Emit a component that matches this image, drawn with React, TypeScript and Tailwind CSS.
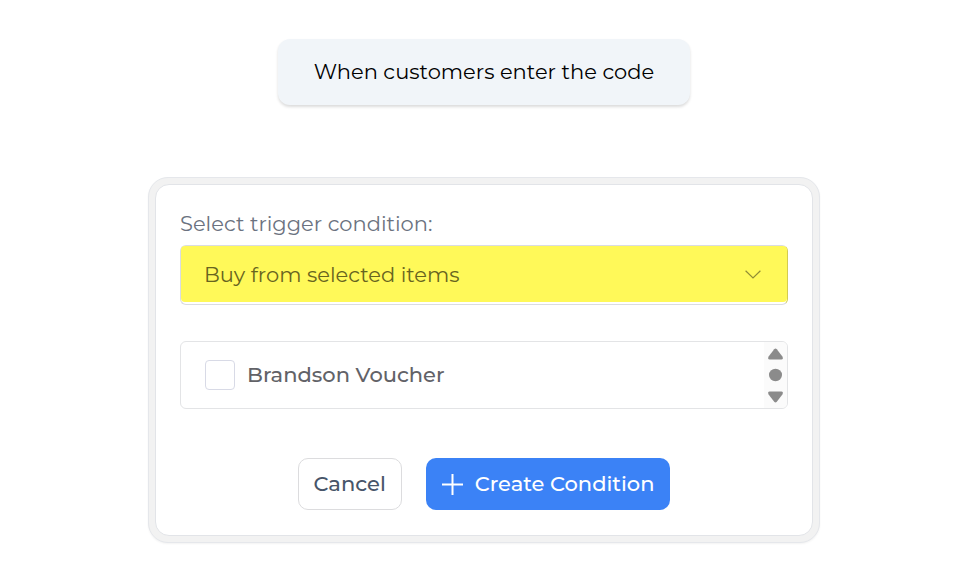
import { useState } from "react";
import type { ReactNode } from "react";

const conditions = ["Buy from selected items", "Buy from any category", "Spend a minimum amount"];

function StepCard({ children }: { children: ReactNode }) {
  return (
    <div className="rounded-xl bg-slate-100 px-9 py-[17px] text-[21px] leading-8 text-black shadow-[0_2px_3px_rgba(0,0,0,0.14)]">
      {children}
    </div>
  );
}

function ConditionSelect() {
  const [value, setValue] = useState(conditions[0]);

  return (
    <div>
      <label htmlFor="condition" className="block text-[21px] leading-8 text-[#6b7280]">
        Select trigger condition:
      </label>
      {/* Highlighted field */}
      <div className="relative mt-[5px] rounded-md border border-[#dadce2] border-r-[#d3cc4f] pb-0.5">
        <select
          id="condition"
          value={value}
          onChange={(e) => setValue(e.target.value)}
          className="block h-14 w-full appearance-none rounded-sm bg-[#fff959] pl-[23px] pr-16 pt-px text-[21px] text-[#67641f] outline-none"
        >
          {conditions.map((c) => (
            <option key={c}>{c}</option>
          ))}
        </select>
        <svg
          viewBox="0 0 16 9"
          className="pointer-events-none absolute right-[26px] top-6 h-[9px] w-4"
          fill="none"
          stroke="#918d35"
          strokeWidth="1.2"
          aria-hidden="true"
        >
          <path d="M.6.8 8 8 15.4.8" />
        </svg>
      </div>
    </div>
  );
}

function ItemList() {
  return (
    <div className="mt-9 flex h-[68px] overflow-hidden rounded-md border border-[#e3e4e6]">
      <label className="flex flex-1 items-center gap-3 pl-6 text-[21px] font-medium text-[#626267]">
        <input
          type="checkbox"
          className="size-[30px] appearance-none rounded-sm border border-[#d8dae6] bg-white checked:bg-blue-500"
        />
        Brandson Voucher
      </label>
      {/* Scroll bar */}
      <svg viewBox="0 0 23 66" className="h-full w-[23px] bg-[#fbfbfb]" fill="#8b8b8b" aria-hidden="true">
        <path d="M10.2 7.3q1.3-1.6 2.6 0l5.6 7.2q1.3 2.8-1 3H5.6q-2.3-.2-1-3z" />
        <ellipse cx="11.5" cy="33" rx="6.5" ry="6.2" />
        <path d="M10.2 59.7q1.3 1.6 2.6 0l5.6-7.2q1.3-2.8-1-3H5.6q-2.3.2-1 3z" />
      </svg>
    </div>
  );
}

export default function App() {
  return (
    <main className="flex min-h-screen flex-col items-center bg-white px-4 pb-9 pt-[39px] font-['Montserrat',Inter,sans-serif]">
      <StepCard>When customers enter the code</StepCard>

      {/* Condition form */}
      <section className="mt-[72px] w-full max-w-[672px] rounded-[20px] border border-[#e5e7eb] bg-[#f2f2f2] p-1.5 shadow-xs">
        <div className="rounded-[14px] border border-[#e2e4e8] bg-white px-6 pb-[25px] pt-[23px]">
          <ConditionSelect />
          <ItemList />

          <div className="mt-[49px] flex items-center justify-center gap-6 text-[21px] font-medium">
            <button type="button" className="h-[52px] rounded-[10px] border border-[#dcdcde] bg-white px-[15px] text-[#475569]">
              Cancel
            </button>
            <button type="button" className="flex h-[52px] items-center gap-3 rounded-[10px] bg-[#3b82f6] px-4 text-white">
              <svg viewBox="0 0 21 21" className="size-[21px]" fill="none" stroke="currentColor" strokeWidth="2" aria-hidden="true">
                <path d="M10.5 0v21M0 10.5h21" />
              </svg>
              Create Condition
            </button>
          </div>
        </div>
      </section>
    </main>
  );
}
